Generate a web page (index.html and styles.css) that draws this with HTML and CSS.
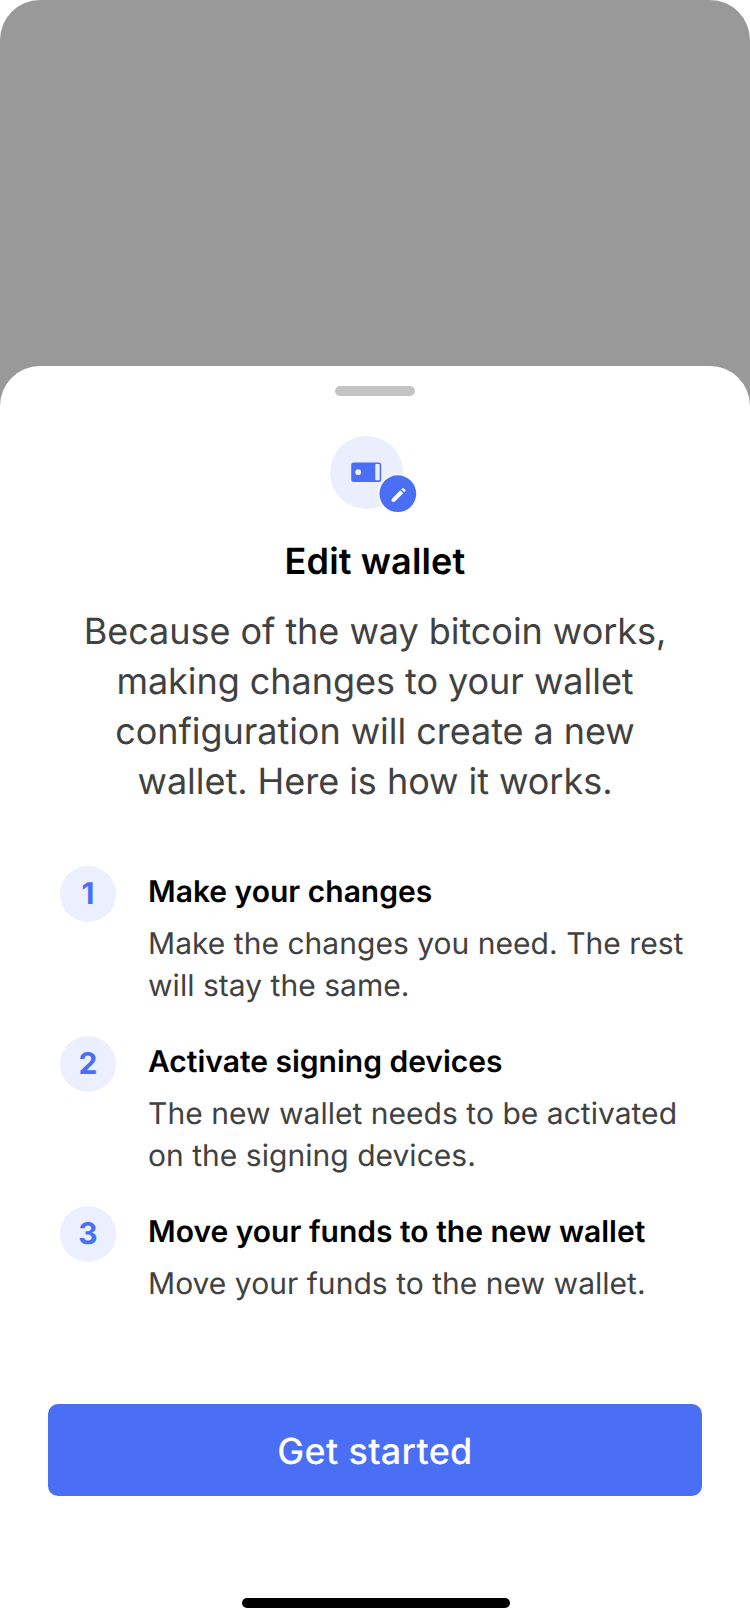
FILE: index.html
```html
<!DOCTYPE html>
<html lang="en">
<head>
<meta charset="utf-8">
<title>Edit wallet</title>
<link rel="stylesheet" href="styles.css">
</head>
<body>
<main class="screen">
  <section class="sheet">
    <div class="grabber"></div>
    <svg class="hero" width="90" height="80" viewBox="0 0 90 80">
      <circle cx="36.600" cy="36.500" r="36.600" fill="#ebeffd"/>
      <rect x="21.200" y="26.400" width="30" height="19.600" rx="2.500" fill="#4a6ff5"/>
      <rect x="45.300" y="28" width="4.400" height="16.300" rx=".8" fill="#ebeffd"/>
      <circle cx="28.200" cy="36.200" r="2.900" fill="#ebeffd"/>
      <circle cx="67.800" cy="57.700" r="19.800" fill="#fff"/>
      <circle cx="67.800" cy="57.700" r="18.400" fill="#4a6ff5"/>
      <path d="M61.700 65.200v-2.300l8.600-8.600 2.900 2.900-8.600 8.600h-2.300q-.6 0-.6-.6zM71.300 53.300l.9-.9q.8-.7 1.600 0l1.400 1.400q.7.800 0 1.500l-.9.900z" fill="#fff"/>
    </svg>
    <h1 class="title">Edit wallet</h1>
    <p class="lead">Because of the way bitcoin works,<br>making changes to your wallet<br>configuration will create a new<br>wallet. Here is how it works.</p>
    <ol class="steps">
      <li class="step"><span class="num">1</span><div class="body"><h2 class="name">Make your changes</h2><p class="text">Make the changes you need. The rest<br>will stay the same.</p></div></li>
      <li class="step"><span class="num">2</span><div class="body"><h2 class="name">Activate signing devices</h2><p class="text">The new wallet needs to be activated<br>on the signing devices.</p></div></li>
      <li class="step"><span class="num">3</span><div class="body"><h2 class="name">Move your funds to the new wallet</h2><p class="text">Move your funds to the new wallet.</p></div></li>
    </ol>
    <button class="cta">Get started</button>
    <div class="home"></div>
  </section>
</main>
</body>
</html>
```
FILE: styles.css
```css
* { box-sizing: border-box; margin: 0; padding: 0; }
body { background: #fff; font-family: Inter, sans-serif; text-rendering: geometricPrecision; }
.screen { width: 750px; height: 1624px; padding-top: 366px; background: #999; border-radius: 40px 40px 0 0; }
.sheet { height: 1258px; background: #fff; border-radius: 40px 40px 0 0; display: flex; flex-direction: column; align-items: center; }
.grabber { width: 80px; height: 10px; margin-top: 20px; border-radius: 5px; background: #c4c4c4; flex: none; }
.hero { margin-top: 40px; flex: none; }
.title { margin-top: 23px; font-size: 36px; line-height: 44px; font-weight: 600; letter-spacing: 0.15px; color: #000; }
.lead { margin-top: 23px; font-size: 36px; line-height: 50px; letter-spacing: -0.04px; text-align: center; color: #414141; white-space: nowrap; }
.steps { list-style: none; align-self: stretch; margin-top: 60px; padding-left: 60px; display: flex; flex-direction: column; gap: 29px; }
.step { display: flex; gap: 32px; }
.num { width: 56px; height: 56px; flex: none; border-radius: 50%; background: #ebeffe; color: #4a6ff5; font-size: 30px; line-height: 56px; font-weight: 700; text-align: center; }
.name { font-size: 30px; line-height: 42px; font-weight: 600; margin-top: 5px; color: #000; white-space: nowrap; }
.text { font-size: 30px; line-height: 42px; margin-top: 10px; letter-spacing: 0.03px; color: #414141; white-space: nowrap; }
.cta { width: 654px; height: 92px; margin-top: 99px; padding-top: 2px; border: 0; border-radius: 10px; background: #4a6ff5; color: #fff; font: 500 36px/90px Inter, sans-serif; letter-spacing: 0.3px; text-rendering: geometricPrecision; flex: none; }
.home { width: 268px; height: 10px; margin-top: 102px; margin-left: 2px; border-radius: 5px; background: #000; flex: none; }
```
